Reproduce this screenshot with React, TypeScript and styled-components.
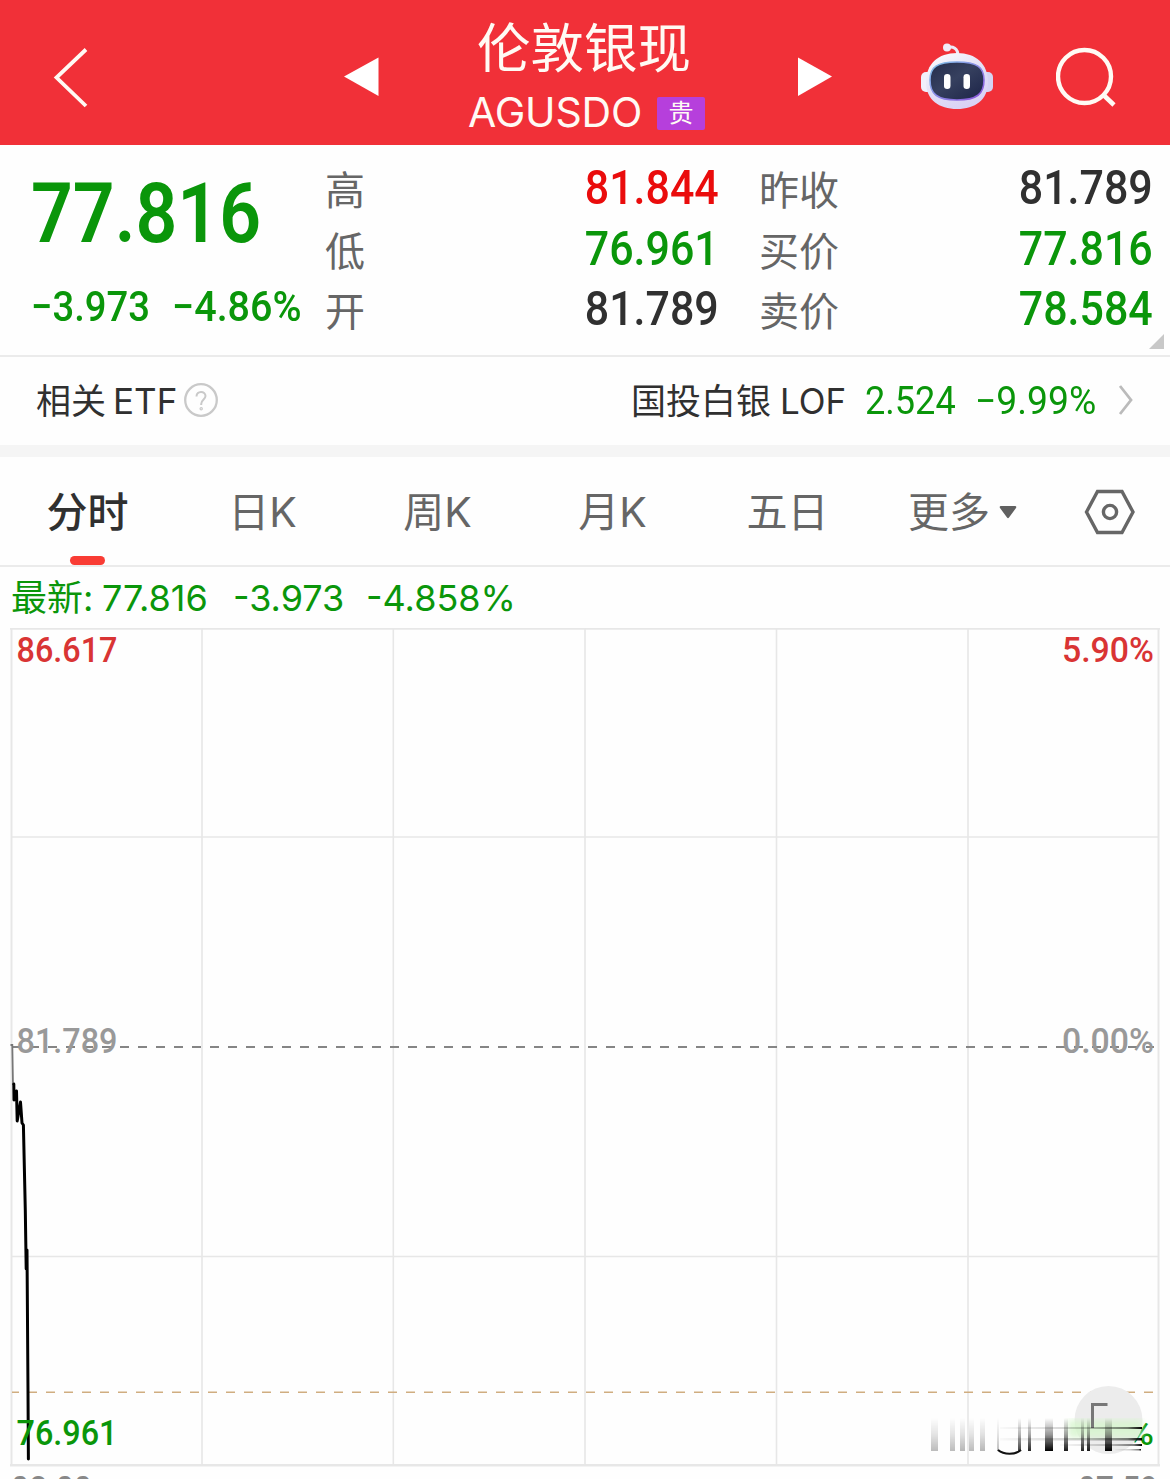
import React from "react";
import styled, { createGlobalStyle } from "styled-components";

const GREEN = "#0a960a";
const RED = "#ea0c0c";
const INK = "#303030";
const GRAY = "#666";

const Global = createGlobalStyle`
  * { box-sizing: border-box; }
  body { margin: 0; background: #fff; }
`;

const Screen = styled.main`
  width: 1170px;
  height: 1479px;
  overflow: hidden;
  display: flex;
  flex-direction: column;
  background: #fefefe;
  color: ${INK};
  font-family: Inter, "Noto Sans CJK SC", sans-serif;
  white-space: nowrap;
`;

const Header = styled.header`
  flex: none;
  height: 145px;
  background: #f13038;
  color: #fffaf4;
  display: grid;
  grid-template-columns: 344px 36px 408px 132px 136px 114px;
`;

const HeaderCell = styled.div<{ $left?: number; $top?: number }>`
  padding-left: ${(p) => p.$left ?? 0}px;
  padding-top: ${(p) => p.$top ?? 0}px;
  svg { display: block; }
`;

const TitleBlock = styled.div`
  padding-left: 88px;
  display: flex;
  flex-direction: column;
`;

const Title = styled.h1`
  margin: 0;
  padding: 19px 0 0 9px;
  font-size: 53.5px;
  line-height: 60px;
  font-weight: 400;
`;

const CodeLine = styled.div`
  display: flex;
  align-items: center;
  height: 50px;
  margin-top: 8px;
`;

const Code = styled.span`
  width: 189px;
  height: 50px;
  font-size: 41px;
  line-height: 50px;
  letter-spacing: -0.2px;
`;

const Badge = styled.span`
  width: 48px;
  height: 33px;
  margin-top: 3px;
  border-radius: 2px;
  background: #b63fdc;
  font-size: 25px;
  line-height: 33px;
  text-align: center;
`;

const Quote = styled.section`
  flex: none;
  height: 212px;
  border-bottom: 2px solid #ebebeb;
  display: grid;
  grid-template-columns: 325px 394px 434px 17px;
`;

const Din = styled.span<{ $size: number; $weight?: number; $color?: string; $sx?: number; $right?: boolean }>`
  display: block;
  font-family: Roboto, sans-serif;
  font-size: ${(p) => p.$size}px;
  font-weight: ${(p) => p.$weight ?? 500};
  color: ${(p) => p.$color ?? INK};
  transform: scaleX(${(p) => p.$sx ?? 0.91});
  transform-origin: ${(p) => (p.$right ? "right" : "left")} center;
`;

const PriceBlock = styled.div`
  padding: 19px 0 0 31px;
`;

const PriceLine = styled.div`
  height: 100px;
  line-height: 100px;
`;

const ChangeLine = styled.div`
  display: grid;
  grid-template-columns: 141px 140px;
  margin-top: 18px;
  line-height: 50px;
`;

const Stats = styled.dl<{ $left: number }>`
  margin: 0;
  padding: 16px 0 0 ${(p) => p.$left}px;
`;

const Stat = styled.div`
  height: 60.5px;
  display: flex;
  justify-content: space-between;
  align-items: center;
`;

const StatLabel = styled.dt`
  font-size: 40px;
  line-height: 60px;
  color: ${GRAY};
`;

const StatValue = styled.dd`
  margin: -6px 0 0;
  line-height: 56px;
`;

const Corner = styled.svg`
  align-self: end;
  margin: 0 0 6px -4px;
`;

const EtfRow = styled.section`
  flex: none;
  height: 100px;
  padding-left: 36px;
  border-bottom: 12px solid #f5f5f5;
  display: grid;
  grid-template-columns: 77px 71px 447px 149px 85px 110px 143px 40px;
  align-items: center;
  font-size: 35px;
  line-height: 60px;
  svg { display: block; }
`;

const Latin = styled.span`
  font-size: 35px;
`;

const Tabs = styled.nav`
  flex: none;
  height: 110px;
  border-bottom: 2px solid #ebebeb;
  display: grid;
  grid-template-columns: repeat(6, 175px) 120px;
`;

const Tab = styled.div<{ $active?: boolean }>`
  display: flex;
  flex-direction: column;
  align-items: center;
  padding-top: 25px;
  font-size: 41px;
  line-height: 60px;
  font-weight: ${(p) => (p.$active ? 500 : 400)};
  color: ${(p) => (p.$active ? INK : GRAY)};
`;

const TabText = styled.span`
  display: flex;
  align-items: center;
  height: 60px;
  gap: 9px;
`;

const Indicator = styled.span`
  width: 35px;
  height: 9px;
  margin-top: 14px;
  border-radius: 5px;
  background: #f93c34;
`;

const Latest = styled.div`
  flex: none;
  height: 61px;
  padding: 1px 0 0 11px;
  display: grid;
  grid-template-columns: 91px 131px 133px 200px;
  color: ${GREEN};
  font-size: 36px;
  line-height: 61px;
`;

const Chart = styled.svg`
  flex: none;
  display: block;
  font-family: Roboto, sans-serif;
  font-size: 35px;
  font-weight: 500;
`;

const stats = [
  [
    ["高", "81.844", RED],
    ["低", "76.961", GREEN],
    ["开", "81.789", INK],
  ],
  [
    ["昨收", "81.789", INK],
    ["买价", "77.816", GREEN],
    ["卖价", "78.584", GREEN],
  ],
];

const tabs = ["分时", "日K", "周K", "月K", "五日", "更多"];

// x, width and opacity of each fading vertical stroke of the watermark
const strokes = [
  [931, 7, 0.26], [950, 5, 0.26], [960, 5, 0.28], [969, 5, 0.26], [980, 5, 0.28],
  [997, 2, 0.25], [1018, 3, 0.75], [1028, 3, 0.85], [1045, 8, 1], [1064, 4, 0.9],
  [1081, 3, 0.85], [1087, 3, 0.9], [1105, 7, 1],
];

const StatColumn = ({ rows, left }: { rows: string[][]; left: number }) => (
  <Stats $left={left}>
    {rows.map(([label, value, color]) => (
      <Stat key={label}>
        <StatLabel>{label}</StatLabel>
        <StatValue>
          <Din $size={48} $color={color} $sx={0.895} $right>{value}</Din>
        </StatValue>
      </Stat>
    ))}
  </Stats>
);

const Robot = () => (
  <svg width="74" height="68" viewBox="0 0 74 68">
    <defs>
      <linearGradient id="shell" x1="0" y1="0" x2="0.6" y2="1">
        <stop offset="0" stopColor="#fff" />
        <stop offset="0.55" stopColor="#e3e0f6" />
        <stop offset="1" stopColor="#d9d2f5" />
      </linearGradient>
      <linearGradient id="rim" x1="0" y1="0" x2="1" y2="1">
        <stop offset="0" stopColor="#7fc4e6" />
        <stop offset="0.5" stopColor="#8c8ce8" />
        <stop offset="1" stopColor="#8a4fd8" />
      </linearGradient>
      <linearGradient id="visor" x1="0" y1="0" x2="1" y2="1">
        <stop offset="0" stopColor="#252d4c" />
        <stop offset="0.45" stopColor="#36405f" />
        <stop offset="1" stopColor="#1b2347" />
      </linearGradient>
    </defs>
    <path d="M27 5.5C33 4 38 6 38 14" fill="none" stroke="#ece9f8" strokeWidth="3" />
    <circle cx="27" cy="5.5" r="4" fill="#f0ecf8" />
    <rect x="1" y="30" width="12" height="20" rx="5" fill="#f1effb" />
    <rect x="61" y="30" width="12" height="20" rx="5" fill="#d5d3f2" />
    <path d="M37 11C56 11 68 22 68 40C68 58 55 67 37 67C19 67 6 58 6 40C6 22 18 11 37 11Z" fill="url(#shell)" />
    <path d="M37 20C57 20 64 25 64 38C64 52 57 58 37 58C17 58 10 52 10 38C10 25 17 20 37 20Z" fill="url(#visor)" stroke="url(#rim)" strokeWidth="1.6" />
    <rect x="24" y="32" width="6.5" height="15" rx="3.2" fill="#fff" />
    <rect x="43.5" y="32" width="6.5" height="15" rx="3.2" fill="#fff" />
  </svg>
);

const PriceChart = () => (
  <Chart width="1170" height="851" viewBox="0 628 1170 851">
    <defs>
      <linearGradient id="fade" x1="0" y1="0" x2="0" y2="1">
        <stop offset="0" stopColor="#000" stopOpacity="0" />
        <stop offset="0.5" stopColor="#000" stopOpacity="0.4" />
        <stop offset="1" stopColor="#000" />
      </linearGradient>
      <linearGradient id="fadeAcross">
        <stop offset="0" stopColor="#000" stopOpacity="0.02" />
        <stop offset="0.6" stopColor="#000" stopOpacity="0.2" />
        <stop offset="0.9" stopColor="#000" stopOpacity="0.5" />
        <stop offset="1" stopColor="#000" />
      </linearGradient>
      <filter id="soft"><feGaussianBlur stdDeviation="3" /></filter>
      <filter id="edge"><feGaussianBlur stdDeviation="0.7" /></filter>
    </defs>
    <g stroke="#e7e7e7" strokeWidth="1.6" fill="none">
      <path d="M10 628.8H1160M11.5 628V1466M1158.5 628V1466" strokeWidth="2" />
      <path d="M10 1465.3H1160" strokeWidth="2.4" />
      <path d="M202 628V1465M393.3 628V1465M585 628V1465M776.5 628V1465M968 628V1465M12 837H1158M12 1256.5H1158" />
    </g>
    <path d="M12 1047H1154" stroke="#858585" strokeWidth="1.8" strokeDasharray="9 9" />
    <path d="M12 1392.3H1154" stroke="#d0ad80" strokeWidth="1.6" strokeDasharray="9 9" strokeDashoffset="2" />
    <path d="M10.5 1045H12.3L13 1085" fill="none" stroke="#777" strokeWidth="1.8" />
    <path d="M13.8 1084L14 1100L16.5 1091L17.2 1121L20.5 1102L22 1123L23.4 1125L25.3 1210L26.2 1269L27 1250L28 1391L28.4 1459" fill="none" stroke="#000" strokeWidth="3" strokeLinejoin="round" strokeLinecap="round" />
    <g>
      <text x="16.5" y="661.5" textLength="101" lengthAdjust="spacingAndGlyphs" fill="#d93434">86.617</text>
      <text x="1062" y="661.5" textLength="92" lengthAdjust="spacingAndGlyphs" fill="#d93434">5.90%</text>
      <text x="16.5" y="1053" textLength="101" lengthAdjust="spacingAndGlyphs" fill="#999">81.789</text>
      <text x="1062" y="1053" textLength="92" lengthAdjust="spacingAndGlyphs" fill="#999">0.00%</text>
      <text x="16.5" y="1445" textLength="101" lengthAdjust="spacingAndGlyphs" fill={GREEN}>76.961</text>
      <text x="1127" y="1445" textLength="27" lengthAdjust="spacingAndGlyphs" fill={GREEN}>%</text>
      <text x="11" y="1500.5" textLength="81" lengthAdjust="spacingAndGlyphs" fill="#888">08:00</text>
      <text x="1078" y="1500.5" textLength="80" lengthAdjust="spacingAndGlyphs" fill="#888">07:59</text>
    </g>
    <circle cx="1108.5" cy="1420" r="34" fill="#ececec" />
    <rect x="1068" y="1420" width="74" height="18" fill="#d5f5cc" opacity="0.8" filter="url(#soft)" />
    <path d="M1092.5 1428V1404.5H1107.5" fill="none" stroke="#777" strokeWidth="3" />
    <g filter="url(#edge)">
      {strokes.map(([x, width, opacity]) => (
        <rect key={x} x={x} y="1418" width={width} height="33" opacity={opacity} fill="url(#fade)" />
      ))}
      <g fill="url(#fadeAcross)">
        <rect x="1000" y="1427" width="142" height="2" />
        <rect x="1000" y="1438" width="142" height="2.5" />
        <rect x="1060" y="1444" width="82" height="2" />
        <rect x="1115" y="1449" width="26" height="1.5" />
      </g>
    </g>
    <path d="M998 1450C1004 1455 1015 1455 1021 1450" fill="none" stroke="#111" strokeWidth="2.2" />
  </Chart>
);

export default function App() {
  return (
    <Screen>
      <Global />
      <Header>
        <HeaderCell $left={52} $top={46}>
          <svg width="38" height="64"><path d="M34 3.5L4.5 31.5L34 60" fill="none" stroke="currentColor" strokeWidth="3.8" /></svg>
        </HeaderCell>
        <HeaderCell $top={57}>
          <svg width="36" height="40"><path d="M0 19.5L34.5 0.5V39Z" fill="#fff" /></svg>
        </HeaderCell>
        <TitleBlock>
          <Title>伦敦银现</Title>
          <CodeLine>
            <Code>AGUSDO</Code>
            <Badge>贵</Badge>
          </CodeLine>
        </TitleBlock>
        <HeaderCell $left={9} $top={57}>
          <svg width="36" height="40"><path d="M35 19.5L1 0.5V39Z" fill="#fff" /></svg>
        </HeaderCell>
        <HeaderCell $top={42}><Robot /></HeaderCell>
        <HeaderCell $top={46}>
          <svg width="64" height="64"><circle cx="28.5" cy="30.5" r="26.5" fill="none" stroke="currentColor" strokeWidth="4.4" /><path d="M47.5 49L58 59" stroke="currentColor" strokeWidth="4.6" /></svg>
        </HeaderCell>
      </Header>
      <Quote>
        <PriceBlock>
          <PriceLine><Din $size={84} $color={GREEN} $weight={600} $sx={0.872}>77.816</Din></PriceLine>
          <ChangeLine>
            <Din $size={42} $color={GREEN}>−3.973</Din>
            <Din $size={42} $color={GREEN} $sx={0.94}>−4.86%</Din>
          </ChangeLine>
        </PriceBlock>
        <StatColumn rows={stats[0]} left={0} />
        <StatColumn rows={stats[1]} left={40} />
        <Corner width="15" height="15"><path d="M15 0V15H0Z" fill="#c8c8c8" /></Corner>
      </Quote>
      <EtfRow>
        <span>相关</span>
        <Latin>ETF</Latin>
        <svg width="34" height="36" fill="none" stroke="#c9c9c9" strokeWidth="2.3">
          <circle cx="17" cy="17" r="15.8" />
          <path d="M12.5 13.5C12.5 7.5 21.5 7.5 21.5 13C21.5 16.5 17.2 16.5 17.2 21V22" strokeWidth="2" />
          <circle cx="17.2" cy="25.8" r="0.6" />
        </svg>
        <span>国投白银</span>
        <Latin>LOF</Latin>
        <Din $size={38} $weight={400} $color={GREEN} $sx={0.95}>2.524</Din>
        <Din $size={38} $weight={400} $color={GREEN} $sx={0.98}>−9.99%</Din>
        <svg width="18" height="36"><path d="M2 3L13 17L2 31" fill="none" stroke="#bbb" strokeWidth="2.8" /></svg>
      </EtfRow>
      <Tabs>
        {tabs.map((name, i) => (
          <Tab key={name} $active={i === 0}>
            <TabText>
              {name}
              {name === "更多" && <svg width="18" height="14"><path d="M2 1H16Q18 1 17 3L10 12.5Q9 14 8 12.5L1 3Q0 1 2 1Z" fill="#606060" /></svg>}
            </TabText>
            {i === 0 && <Indicator />}
          </Tab>
        ))}
        <Tab>
          <TabText>
            <svg width="54" height="50" fill="none" stroke="#666" strokeWidth="3.4"><path d="M3.5 25L14.5 4.5H39L50 25L39 45.5H14.5Z" /><circle cx="27" cy="25" r="6.6" /></svg>
          </TabText>
        </Tab>
      </Tabs>
      <Latest>
        <span>最新:</span>
        <span>77.816</span>
        <span>-3.973</span>
        <span>-4.858%</span>
      </Latest>
      <PriceChart />
    </Screen>
  );
}
